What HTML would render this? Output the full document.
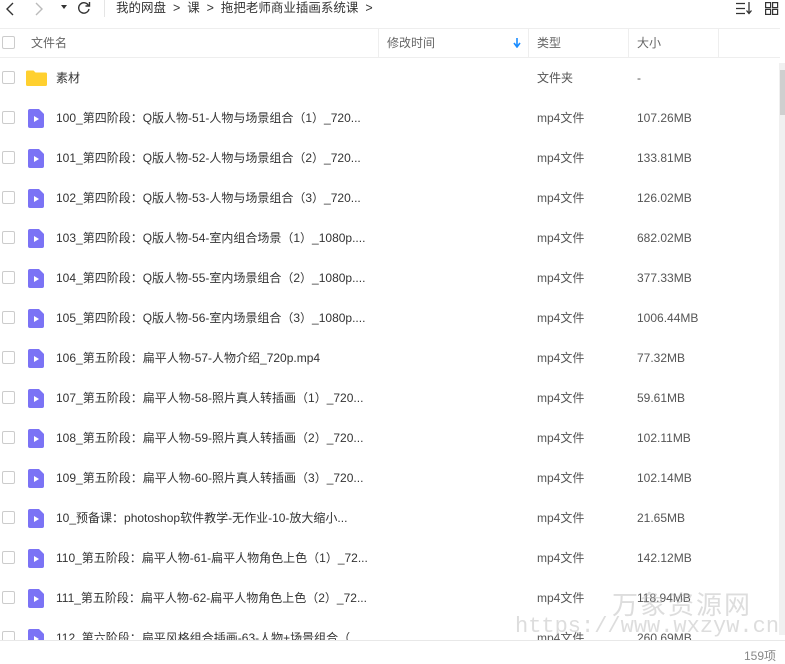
<!DOCTYPE html>
<html><head><meta charset="utf-8"><style>
*{margin:0;padding:0;box-sizing:border-box}
body{width:785px;height:662px;overflow:hidden;background:#fff;font-family:"Liberation Sans","Noto Sans CJK SC",sans-serif;color:#333;font-size:12px;position:relative}
.abs{position:absolute}
.hdr{position:absolute;top:28px;left:0;width:780px;height:30px;border-top:1px solid #eee;border-bottom:1px solid #eee;color:#666;line-height:28px}
.hdr span{position:absolute;top:0}
.sep{position:absolute;top:0;width:1px;height:28px;background:#eee}
.cb{position:absolute;left:2px;width:13px;height:13px;border:1px solid #ccc;border-radius:2px;background:#fff}
.row{position:absolute;left:0;width:775px;height:40px;line-height:40px}
.row .cb{top:13px}
.row .n{position:absolute;left:56px;top:0;white-space:nowrap}
.row .t{position:absolute;left:537px;top:0;color:#555}
.row .s{position:absolute;left:637px;top:0;color:#555}
.ic{position:absolute;left:28px;top:11px}
</style></head><body>
<svg class="abs" style="left:5px;top:2px" width="10" height="14" viewBox="0 0 10 14"><path d="M8 1L2 7l6 6" stroke="#333" stroke-width="1.4" fill="none"/></svg>
<svg class="abs" style="left:34px;top:2px" width="10" height="14" viewBox="0 0 10 14"><path d="M2 1l6 6-6 6" stroke="#bbb" stroke-width="1.4" fill="none"/></svg>
<svg class="abs" style="left:61px;top:5px" width="6" height="5"><path d="M0 0h6L3 4z" fill="#333"/></svg>
<svg class="abs" style="left:77px;top:1px" width="14" height="14" viewBox="0 0 14 14"><path d="M11.5 4.5A5.2 5.2 0 1 0 12 8" stroke="#333" stroke-width="1.4" fill="none"/><path d="M12.5 1v4h-4" stroke="#333" stroke-width="1.4" fill="none"/></svg>
<div class="abs" style="left:104px;top:0;width:1px;height:17px;background:#e5e5e5"></div>
<div class="abs" style="left:116px;top:0;line-height:17px;font-size:12.5px;color:#333;white-space:nowrap">我的网盘 &nbsp;&gt;&nbsp; 课 &nbsp;&gt;&nbsp; 拖把老师商业插画系统课 &nbsp;&gt;</div>
<svg class="abs" style="left:736px;top:2px" width="17" height="13"><path d="M0 1.5h9M0 6.5h9M0 11.5h9" stroke="#333" stroke-width="1.3"/><path d="M13 0v11M10.5 8.5l2.5 3 2.5-3" stroke="#333" stroke-width="1.3" fill="none"/></svg>
<svg class="abs" style="left:765px;top:2px" width="14" height="13"><rect x=".6" y=".6" width="5" height="5" fill="none" stroke="#333" stroke-width="1.2"/><rect x="7.6" y=".6" width="5" height="5" fill="none" stroke="#333" stroke-width="1.2"/><rect x=".6" y="7.4" width="5" height="5" fill="none" stroke="#333" stroke-width="1.2"/><rect x="7.6" y="7.4" width="5" height="5" fill="none" stroke="#333" stroke-width="1.2"/></svg>
<div class="hdr">
<div class="cb" style="top:7px"></div>
<span style="left:31px">文件名</span>
<div class="sep" style="left:378px"></div>
<span style="left:387px">修改时间</span>
<svg class="abs" style="left:513px;top:9px" width="8" height="10"><path d="M4 0v8M1 5l3 4 3-4" stroke="#1a8cff" stroke-width="1.6" fill="none"/></svg>
<div class="sep" style="left:528px"></div>
<span style="left:537px">类型</span>
<div class="sep" style="left:628px"></div>
<span style="left:637px">大小</span>
<div class="sep" style="left:718px"></div>
</div>
<div class="abs" style="left:779px;top:63px;width:6px;height:572px;background:#f0f0f0"></div>
<div class="abs" style="left:780px;top:70px;width:5px;height:45px;background:#cfcfcf"></div>

<div class="row" style="top:58px"><div class="cb"></div>
<svg class="ic" style="left:26px;top:12px" width="21" height="16"><path d="M0 2a1.5 1.5 0 0 1 1.5-1.5h6l2 2H19.5A1.5 1.5 0 0 1 21 4v10.5a1.5 1.5 0 0 1-1.5 1.5h-18A1.5 1.5 0 0 1 0 14.5z" fill="#ffd02f"/></svg>
<div class="n">素材</div><div class="t">文件夹</div><div class="s">-</div></div>

<div id="rows"></div>
<script>
var d=[["100_第四阶段：Q版人物-51-人物与场景组合（1）_720...","107.26MB"],["101_第四阶段：Q版人物-52-人物与场景组合（2）_720...","133.81MB"],["102_第四阶段：Q版人物-53-人物与场景组合（3）_720...","126.02MB"],["103_第四阶段：Q版人物-54-室内组合场景（1）_1080p....","682.02MB"],["104_第四阶段：Q版人物-55-室内场景组合（2）_1080p....","377.33MB"],["105_第四阶段：Q版人物-56-室内场景组合（3）_1080p....","1006.44MB"],["106_第五阶段：扁平人物-57-人物介绍_720p.mp4","77.32MB"],["107_第五阶段：扁平人物-58-照片真人转插画（1）_720...","59.61MB"],["108_第五阶段：扁平人物-59-照片真人转插画（2）_720...","102.11MB"],["109_第五阶段：扁平人物-60-照片真人转插画（3）_720...","102.14MB"],["10_预备课：photoshop软件教学-无作业-10-放大缩小...","21.65MB"],["110_第五阶段：扁平人物-61-扁平人物角色上色（1）_72...","142.12MB"],["111_第五阶段：扁平人物-62-扁平人物角色上色（2）_72...","118.94MB"],["112_第六阶段：扁平风格组合插画-63-人物+场景组合（...","260.69MB"]];
var h="";for(var i=0;i<d.length;i++){h+='<div class="row" style="top:'+(98+40*i)+'px"><div class="cb"></div><svg class="ic" width="16" height="19"><path d="M2 0h9l5 5v12a2 2 0 0 1-2 2H2a2 2 0 0 1-2-2V2a2 2 0 0 1 2-2z" fill="#7b73f5"/><path d="M6 7l5 3-5 3z" fill="#fff"/></svg><div class="n">'+d[i][0]+'</div><div class="t">mp4文件</div><div class="s">'+d[i][1]+'</div></div>';}
document.getElementById("rows").innerHTML=h;
</script>
<div class="abs" style="left:612px;top:585px;font-size:26px;color:rgba(180,180,180,.45);letter-spacing:2px">万象资源网</div>
<div class="abs" style="left:515px;top:614px;font-size:22px;color:rgba(180,180,180,.45);font-family:'Liberation Mono',monospace">https://www.wxzyw.cn</div>
<div class="abs" style="left:0;top:640px;width:785px;height:22px;background:#fff;border-top:1px solid #e8e8e8"></div>
<div class="abs" style="left:744px;top:647px;font-size:12px;color:#888">159项</div>
</body></html>
